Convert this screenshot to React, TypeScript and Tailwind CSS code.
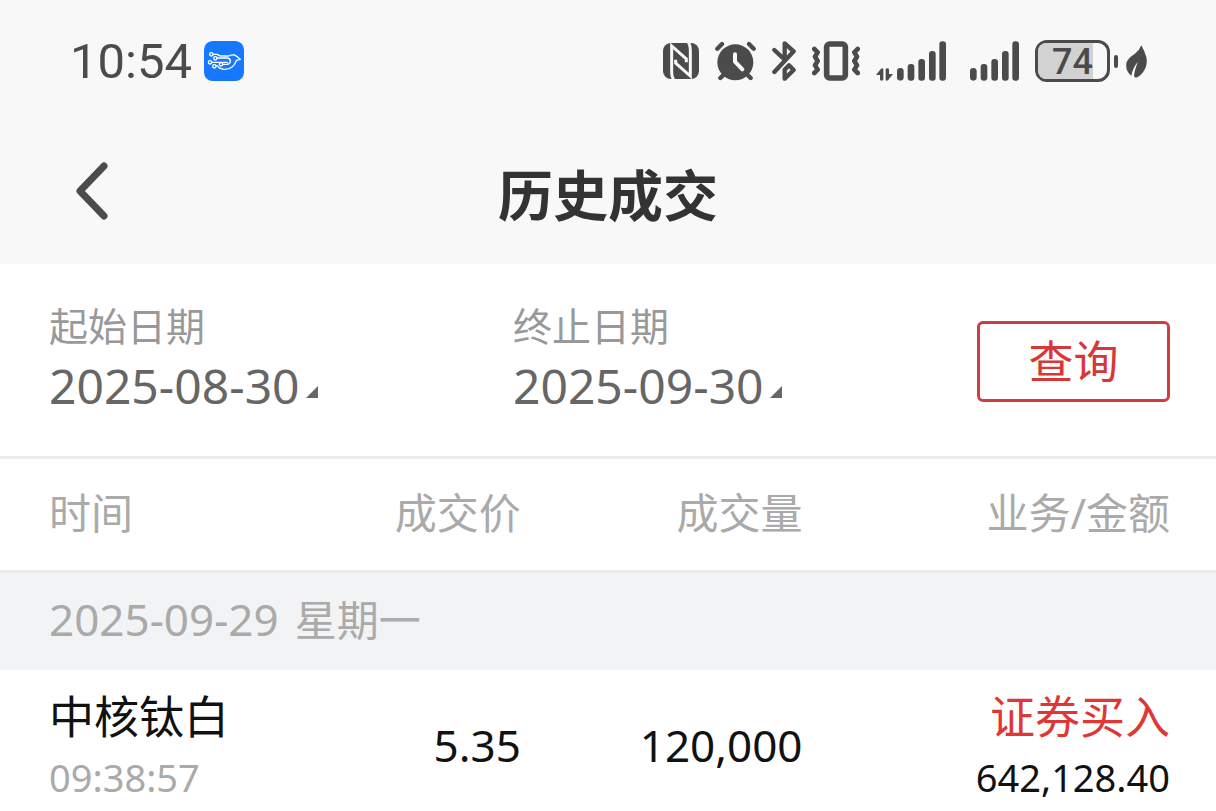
import type { ReactNode } from 'react';

interface Trade {
  name: string;
  time: string;
  price: string;
  volume: string;
  action: string;
  amount: string;
}

const trades: Trade[] = [
  { name: '中核钛白', time: '09:38:57', price: '5.35', volume: '120,000', action: '证券买入', amount: '642,128.40' },
];

function AppBadge() {
  return (
    <svg className="h-10 w-10" viewBox="0 0 120 120" fill="none" stroke="#fff" strokeWidth="4" strokeLinecap="round" strokeLinejoin="round">
      <rect width="120" height="120" rx="26" fill="#1677ff" stroke="none" />
      <circle cx="22" cy="40" r="5" />
      <circle cx="34" cy="52" r="5" />
      <circle cx="18" cy="64" r="5" />
      <circle cx="31" cy="76" r="5" />
      <circle cx="51" cy="70" r="5" />
      <path d="M28 40h12l8 5h26q8-4 18-3l6 4 11 9-12 3q-3 12-12 19-10 9-26 8l-13-4-6-7H37" />
      <path d="M40 51h30M24 64h46M57 70h13q9-2 9-10 0-8-9-9" />
    </svg>
  );
}

function NfcIcon() {
  return (
    <svg className="h-9 w-9" viewBox="0 0 108 108" fill="none" stroke="#f8f8f8" strokeWidth="9">
      <rect width="108" height="108" rx="24" fill="#4b4b4b" stroke="none" />
      <path d="M34 112Q26 104 26 86V9L70 48V58" />
      <path d="M74 -4Q82 4 82 22V99L38 60V50" />
    </svg>
  );
}

function AlarmIcon() {
  return (
    <svg className="h-10 w-[41px]" viewBox="0 0 123 120" fill="none" stroke="#4b4b4b" strokeWidth="13" strokeLinecap="round" strokeLinejoin="round">
      <circle cx="61" cy="64" r="54" fill="#4b4b4b" stroke="none" />
      <path d="M7 23 21 9M102 9l14 14M26 101 16 111M97 101l10 10" />
      <path d="M60 40v22l22 23" stroke="#f8f8f8" strokeWidth="12" />
    </svg>
  );
}

function BluetoothIcon() {
  return (
    <svg className="h-10 w-6" viewBox="0 0 72 120" fill="none" stroke="#4b4b4b" strokeWidth="13" strokeLinecap="round" strokeLinejoin="round">
      <path d="M7 27 38 56V7L65 31 7 93" />
      <path d="M38 86v27l27-26-14-14-13 13" />
    </svg>
  );
}

function VibrateIcon() {
  return (
    <svg className="h-10 w-12" viewBox="0 0 144 120" fill="none" stroke="#4b4b4b" strokeWidth="14" strokeLinecap="round" strokeLinejoin="round">
      <rect x="44" y="9" width="56" height="102" rx="9" strokeWidth="17" />
      <path d="M7 24 17 34 9 47 17 60 9 73 17 86 7 96M137 24 127 34 135 47 127 60 135 73 127 86 137 96" />
    </svg>
  );
}

function SignalIcon({ children }: { children?: ReactNode }) {
  return (
    <div className="flex h-10 items-end gap-1">
      {children}
      <svg className="h-10 w-[49px]" viewBox="0 0 147 120" fill="#4b4b4b">
        <rect x="0" y="81" width="20" height="38" rx="10" />
        <rect x="32" y="69" width="20" height="50" rx="9" />
        <rect x="64" y="54" width="20" height="65" rx="9" />
        <rect x="96" y="30" width="20" height="89" rx="9" />
        <rect x="127" y="1" width="20" height="118" rx="9" />
      </svg>
    </div>
  );
}

function DataArrows() {
  return (
    <svg className="h-[13px] w-[17px]" viewBox="0 0 51 39" fill="#4b4b4b">
      <path d="M0 21 15 2Q22-2 22 5V34Q22 38 17 38T12 34V21Z" />
      <path d="M51 18 36 37Q29 41 29 34V5Q29 1 34 1T39 5V18Z" />
    </svg>
  );
}

function Battery({ level }: { level: number }) {
  return (
    <div className="flex items-center gap-1">
      <div className="relative h-[42px] w-[75px] rounded-xl border-3 border-[#4b4b4b]">
        <div className="h-full rounded-l-lg bg-[#d2d2d2]" style={{ width: `${level + 6}%` }} />
        <span className="absolute inset-0 flex items-center justify-center pt-0.5 text-4xl leading-9 font-medium">{level}</span>
      </div>
      <div className="h-[13px] w-1 rounded-full bg-[#4b4b4b]" />
    </div>
  );
}

function LeafIcon() {
  return (
    <svg className="h-[33px] w-[21px]" viewBox="0 0 63 99">
      <path d="M46 1Q54 15 61 36Q66 61 52 80Q43 94 29 98L24 94Q25 76 36 50Q20 68 16 92Q-2 79 1 55Q4 40 26 27Q40 17 46 1Z" fill="#4b4b4b" />
    </svg>
  );
}

function DateField({ id, label, value }: { id: string; label: string; value: string }) {
  return (
    <div className="flex flex-1 flex-col items-start">
      <label htmlFor={id} className="text-[39px] leading-[56px] text-[#999]">{label}</label>
      <button id={id} type="button" className="flex items-end gap-1.5 text-5xl leading-[64px] text-[#666]">
        {value}
        <svg className="mb-5 h-3 w-3" viewBox="0 0 12 12" fill="#666">
          <path d="M12 0v12H0z" />
        </svg>
      </button>
    </div>
  );
}

export default function App() {
  return (
    <div className="min-h-screen bg-white font-['Noto_Sans','Noto_Sans_CJK_SC',sans-serif] text-[#111]">
      <header className="bg-[#f8f8f8]">
        <div className="flex h-[122px] items-center justify-between pr-[69px] pl-[70px] font-['Roboto',sans-serif] text-[#4b4b4b]">
          <div className="flex items-center gap-3">
            <span className="pt-0.5 text-[49px] leading-[60px]">10:54</span>
            <AppBadge />
          </div>
          <div className="flex items-center gap-4">
            <NfcIcon />
            <AlarmIcon />
            <BluetoothIcon />
            <VibrateIcon />
            <SignalIcon>
              <DataArrows />
            </SignalIcon>
            <div className="ml-2">
              <SignalIcon />
            </div>
            <div className="flex items-center gap-2">
              <Battery level={74} />
              <LeafIcon />
            </div>
          </div>
        </div>
        <div className="grid h-[142px] grid-cols-[1fr_auto_1fr] items-start px-[74px] pt-[33px]">
          <button type="button" aria-label="返回" className="mt-[5px] justify-self-start">
            <svg className="h-[60px] w-9" viewBox="0 0 36 60" fill="none" stroke="#4b4b4b" strokeWidth="7" strokeLinecap="round" strokeLinejoin="round">
              <path d="M30 6 6 31l24 25" />
            </svg>
          </button>
          <h1 className="text-[55px] leading-[80px] font-bold text-[#333]">历史成交</h1>
        </div>
      </header>

      <form className="flex items-start border-b-3 border-[#ebebeb] pt-[34px] pr-[46px] pb-[38px] pl-[49px]">
        <DateField id="start-date" label="起始日期" value="2025-08-30" />
        <DateField id="end-date" label="终止日期" value="2025-09-30" />
        <button type="button" className="mt-[23px] h-[81px] w-[193px] rounded-md border-3 border-[#cf3e3e] text-[45px] leading-[60px] text-[#d93636]">
          查询
        </button>
      </form>

      <table className="w-full table-fixed border-separate border-spacing-0">
        <colgroup>
          <col className="w-[25%]" />
          <col className="w-[18%]" />
          <col className="w-[23%]" />
          <col className="w-[34%]" />
        </colgroup>
        <thead>
          <tr className="h-[114px] text-right text-[42px] leading-[60px] text-[#aaa] *:border-b-3 *:border-[#ebebeb] *:pb-1 *:font-normal">
            <th scope="col" className="pl-[49px] text-left">时间</th>
            <th scope="col" className="pr-0.5">成交价</th>
            <th scope="col">成交量</th>
            <th scope="col" className="pr-[46px]">业务/金额</th>
          </tr>
        </thead>
        <tbody>
          <tr className="h-[97px] bg-[#f2f3f5] text-[#aaa]">
            <th scope="rowgroup" colSpan={4} className="pb-1 pl-[49px] text-left font-normal">
              <div className="flex items-baseline gap-4 leading-[60px]">
                <span className="text-[44px]">2025-09-29</span>
                <span className="text-[42px]">星期一</span>
              </div>
            </th>
          </tr>
          {trades.map((trade) => (
            <tr key={trade.time} className="h-[141px] text-right text-[44px] leading-[60px]">
              <td className="pt-3 pl-[49px] text-left">
                <div className="text-[45px]">{trade.name}</div>
                <div className="text-[38px] text-[#aaa]">{trade.time}</div>
              </td>
              <td className="pt-2 pr-0.5">{trade.price}</td>
              <td className="pt-2">{trade.volume}</td>
              <td className="pt-3 pr-[46px]">
                <div className="text-[45px] text-[#e03636]">{trade.action}</div>
                <div className="text-[38px]">{trade.amount}</div>
              </td>
            </tr>
          ))}
        </tbody>
      </table>
    </div>
  );
}
